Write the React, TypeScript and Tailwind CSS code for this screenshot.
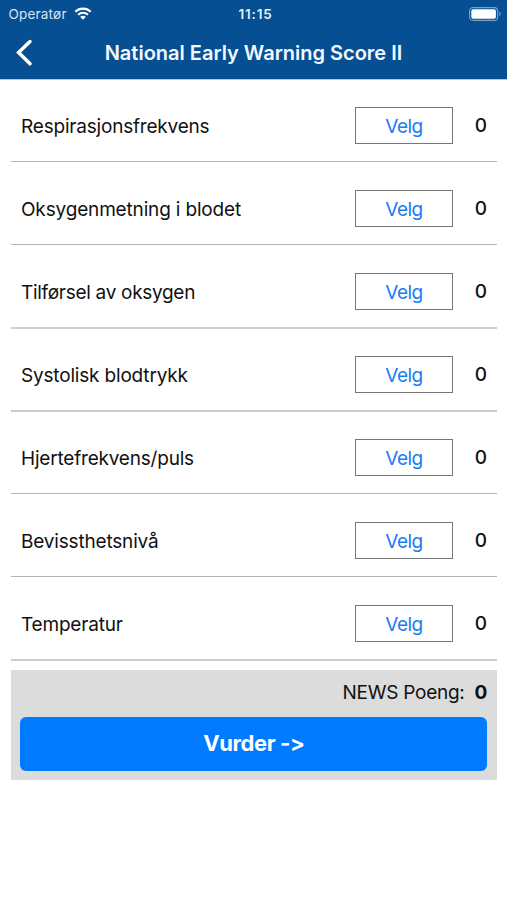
type Item = { label: string; tracking: string; line: string };

const items: Item[] = [
  { label: "Respirasjonsfrekvens", tracking: "tracking-[-0.2px]", line: "h-px bg-[#b4b4b4]" },
  { label: "Oksygenmetning i blodet", tracking: "tracking-[-0.16px]", line: "h-px bg-[#b4b4b4]" },
  { label: "Tilførsel av oksygen", tracking: "tracking-[-0.3px]", line: "h-0.5 -mb-px bg-[#cfcfcf]" },
  { label: "Systolisk blodtrykk", tracking: "tracking-[-0.18px]", line: "h-0.5 -mb-px bg-[#cbcbcb]" },
  { label: "Hjertefrekvens/puls", tracking: "tracking-[-0.2px]", line: "h-px bg-[#b4b4b4]" },
  { label: "Bevissthetsnivå", tracking: "tracking-[-0.18px]", line: "h-px bg-[#b4b4b4]" },
  { label: "Temperatur", tracking: "tracking-[-0.2px]", line: "h-0.5 -mb-px bg-[#cccccc]" },
];

function Wifi() {
  return (
    <svg width="18" height="13" viewBox="0 0 18 13" fill="none" stroke="#fff" strokeWidth="2.1">
      <path d="M1.3 4.8C5.6.6 12.4.6 16.7 4.8" />
      <path d="M4.1 7.7c2.8-2.6 7-2.6 9.8 0" />
      <path d="M9 12.7 6.2 9.9c1.6-1.4 4-1.4 5.6 0z" fill="#fff" stroke="none" />
    </svg>
  );
}

function Battery() {
  return (
    <svg width="33" height="14" viewBox="0 0 33 14" fill="none">
      <rect x=".6" y=".6" width="28" height="12.8" rx="3.4" stroke="#7fa3c8" strokeWidth="1.1" />
      <rect x="2.3" y="2.3" width="24.6" height="9.4" rx="1.8" fill="#fff" />
      <path d="M30.3 4.8c1.8.5 1.8 3.9 0 4.4z" fill="#7fa3c8" />
    </svg>
  );
}

function Header() {
  return (
    <header className="h-20 border-b border-[#a9cbe8] bg-[#074f93] text-white">
      <div className="grid h-[27px] grid-cols-[1fr_60px_1fr] items-center text-[13.5px]">
        <div className="flex items-center gap-[7px] pl-[8.5px] text-[#d5e4f2]">
          <span className="pt-px tracking-[0.2px]">Operatør</span>
          <Wifi />
        </div>
        <span className="pl-[4px] pt-px text-center font-semibold tracking-[0.8px] text-[#e4f0fb]">11:15</span>
        <div className="flex justify-end pr-[5px]"><Battery /></div>
      </div>
      <div className="grid h-[52px] grid-cols-[40px_1fr_40px] items-center">
        <svg className="ml-4" width="17" height="28" viewBox="0 0 17 28" fill="none" stroke="#fff" strokeWidth="3.5" strokeLinecap="round">
          <path d="M14 2.5 2.6 13.6 14 24.7" />
        </svg>
        <h1 className="whitespace-nowrap text-center text-[20px] font-semibold text-[#f2f8ff]">National Early Warning Score II</h1>
      </div>
    </header>
  );
}

export default function App() {
  return (
    <div className="h-[900px] w-[507px] bg-white font-['Inter',sans-serif] text-[#111]">
      <Header />
      <main className="-mt-px pl-[11px] pr-2.5">
        {items.map((item) => (
          <div key={item.label} className="flex h-[83px] flex-col justify-between pt-7">
            <div className="flex h-[37px] items-center pl-2.5 text-[19px]">
              <span className={`flex-1 whitespace-nowrap pt-[3px] ${item.tracking}`}>{item.label}</span>
              <button className="h-[37px] w-[98px] border border-[#777] pt-[3px] tracking-[-0.5px] text-[#1a7cf5]">Velg</button>
              <span className="ml-5 w-4 pt-0.5 text-center font-medium">0</span>
              <span className="w-2" />
            </div>
            <div className={item.line} />
          </div>
        ))}
        <section className="mt-2.5 h-[110px] bg-[#dcdcdc] pl-[9.4px] pr-[9.6px]">
          <div className="flex h-[46.5px] items-center justify-end gap-2.5 text-[19px]">
            <span className="tracking-[-0.25px]">NEWS Poeng:</span>
            <span className="font-bold">0</span>
          </div>
          <button className="h-[54px] w-full rounded-md bg-[#007aff] text-[22px] font-bold tracking-[-0.4px] text-white [font-feature-settings:'calt'_0]">Vurder -&gt;</button>
        </section>
      </main>
    </div>
  );
}
